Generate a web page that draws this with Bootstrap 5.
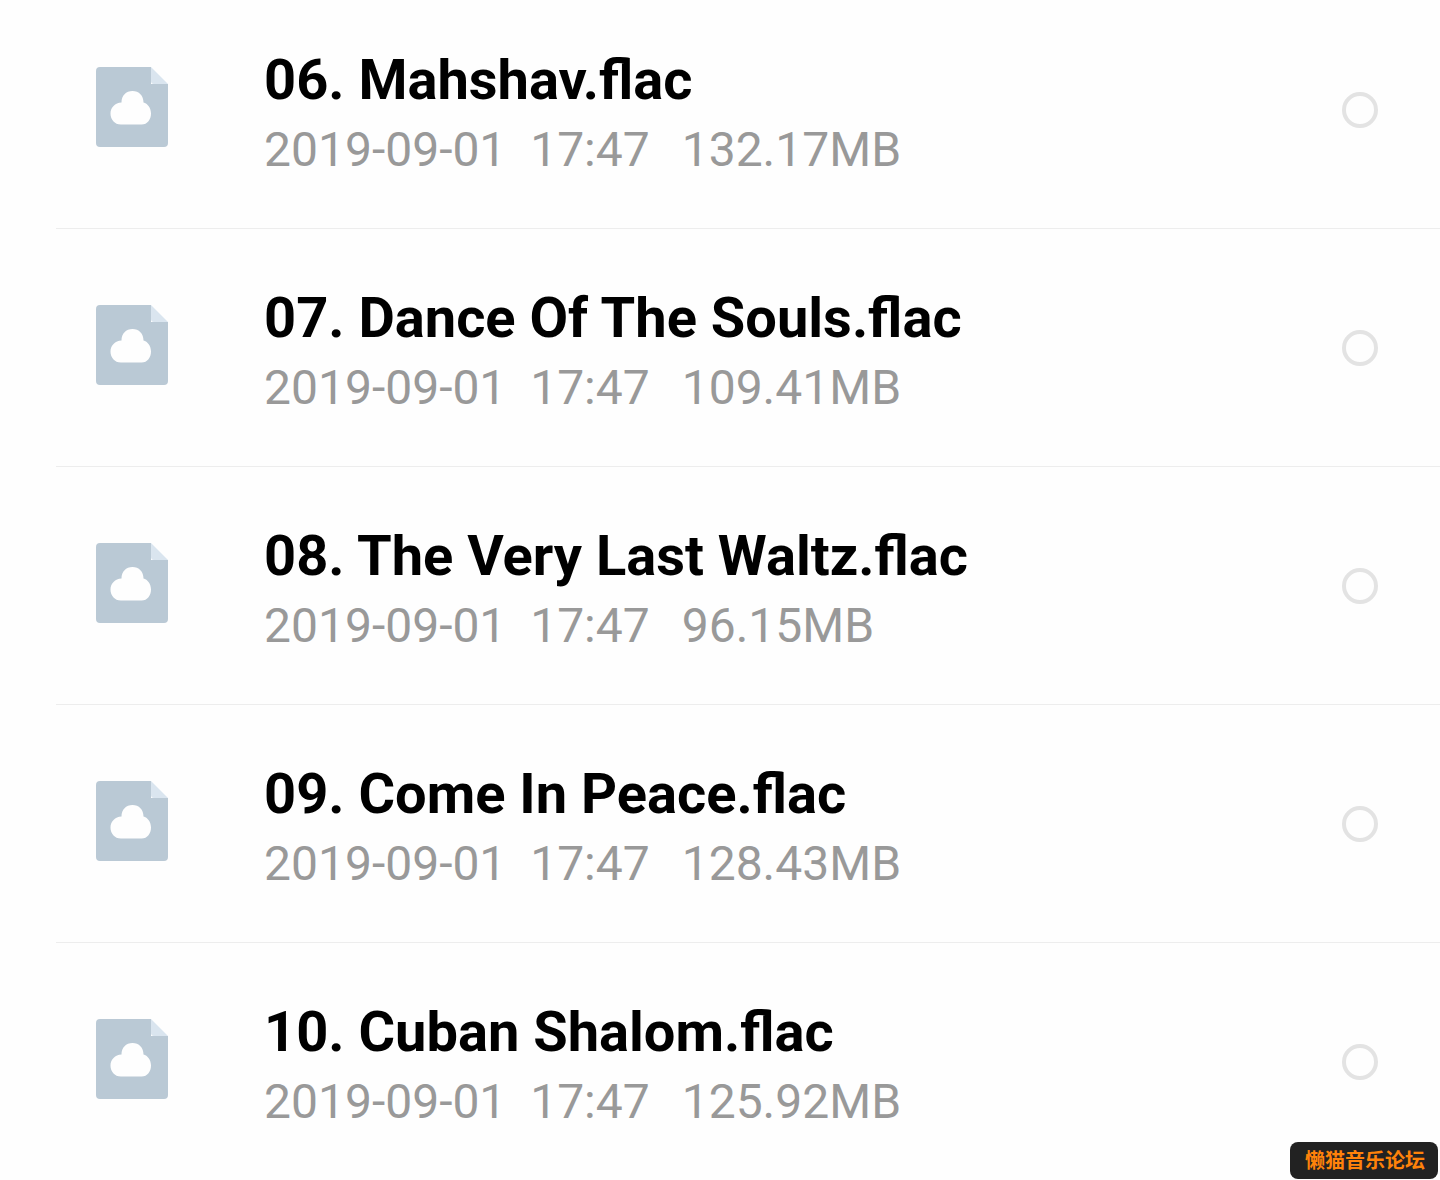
<!DOCTYPE html>
<html lang="en">
<head>
<meta charset="utf-8">
<meta name="viewport" content="width=device-width, initial-scale=1">
<title>Files</title>
<link href="https://cdn.jsdelivr.net/npm/bootstrap@5.3.0/dist/css/bootstrap.min.css" rel="stylesheet">
<style>
  body { background: #fefefe; font-family: Roboto, "Liberation Sans", sans-serif; overflow-x: hidden; }
  .file-list { margin-left: 56px; }
  .file-row { min-height: 238px; padding: 56px 62px 0 40px; border-bottom: 1px solid #ededed; }
  /* the list is scrolled slightly past its first row's top edge */
  .file-row:first-child { min-height: 229px; padding-top: 47px; }
  .file-row:last-child { border-bottom: 0; min-height: 237px; }
  .file-icon { width: 72px; height: 80px; margin-top: 20px; margin-right: 96px; }
  .file-name { font-size: 56px; line-height: 66px; font-weight: 700; color: #000; margin-bottom: 9px; }
  .file-meta { font-size: 48px; line-height: 56px; color: #999; white-space: pre-wrap; }
  .file-size { margin-left: 32px; }
  .file-check.form-check-input { width: 36px; height: 36px; margin-top: 45px; border: 4px solid #e3e3e3; border-radius: 50%; background-color: #fefefe; }
  .file-check.form-check-input:checked { background-color: #0d6efd; border-color: #0d6efd; }
  .forum-tag { right: 2px; bottom: 1px; height: 37px; padding: 0 13px 0 15px; border-radius: 8px; background: #222; color: #ff820a;
    font: 700 20px/36px "Noto Sans CJK SC", sans-serif; }
</style>
</head>
<body>
<svg class="d-none" xmlns="http://www.w3.org/2000/svg">
  <symbol id="cloud-file" viewBox="0 0 72 80">
    <path fill="#bac9d5" d="M4 0H55V17H72V76Q72 80 68 80H4Q0 80 0 76V4Q0 0 4 0Z"/>
    <path fill="#dae5ef" d="M55 0L72 17H58Q55 17 55 14Z"/>
    <path fill="#fefefe" d="M25 57.500C18.500 57.500 14.500 52.500 14.500 46.500C14.500 40.500 19 36 25.500 35.500C25.500 28.500 30 24 36.500 24C43 24 47.500 28.500 47.500 35.500C51.500 36.500 55 41 55 46.500C55 52.500 51.500 57.500 45.500 57.500Z"/>
  </symbol>
</svg>
<main>
  <ul class="file-list list-unstyled mb-0">
    <li class="file-row d-flex align-items-start">
      <svg class="file-icon flex-shrink-0" aria-hidden="true"><use href="#cloud-file"/></svg>
      <label class="flex-grow-1" for="f06"><span class="file-name d-block">06. Mahshav.flac</span><span class="file-meta d-block">2019-09-01  17:47<span class="file-size">132.17MB</span></span></label>
      <input class="file-check form-check-input flex-shrink-0" type="checkbox" id="f06">
    </li>
    <li class="file-row d-flex align-items-start">
      <svg class="file-icon flex-shrink-0" aria-hidden="true"><use href="#cloud-file"/></svg>
      <label class="flex-grow-1" for="f07"><span class="file-name d-block">07. Dance Of The Souls.flac</span><span class="file-meta d-block">2019-09-01  17:47<span class="file-size">109.41MB</span></span></label>
      <input class="file-check form-check-input flex-shrink-0" type="checkbox" id="f07">
    </li>
    <li class="file-row d-flex align-items-start">
      <svg class="file-icon flex-shrink-0" aria-hidden="true"><use href="#cloud-file"/></svg>
      <label class="flex-grow-1" for="f08"><span class="file-name d-block">08. The Very Last Waltz.flac</span><span class="file-meta d-block">2019-09-01  17:47<span class="file-size">96.15MB</span></span></label>
      <input class="file-check form-check-input flex-shrink-0" type="checkbox" id="f08">
    </li>
    <li class="file-row d-flex align-items-start">
      <svg class="file-icon flex-shrink-0" aria-hidden="true"><use href="#cloud-file"/></svg>
      <label class="flex-grow-1" for="f09"><span class="file-name d-block">09. Come In Peace.flac</span><span class="file-meta d-block">2019-09-01  17:47<span class="file-size">128.43MB</span></span></label>
      <input class="file-check form-check-input flex-shrink-0" type="checkbox" id="f09">
    </li>
    <li class="file-row d-flex align-items-start">
      <svg class="file-icon flex-shrink-0" aria-hidden="true"><use href="#cloud-file"/></svg>
      <label class="flex-grow-1" for="f10"><span class="file-name d-block">10. Cuban Shalom.flac</span><span class="file-meta d-block">2019-09-01  17:47<span class="file-size">125.92MB</span></span></label>
      <input class="file-check form-check-input flex-shrink-0" type="checkbox" id="f10">
    </li>
  </ul>
</main>
<div class="forum-tag position-fixed text-nowrap" lang="zh-CN">懒猫音乐论坛</div>
<script src="https://cdn.jsdelivr.net/npm/bootstrap@5.3.0/dist/js/bootstrap.bundle.min.js"></script>
</body>
</html>
